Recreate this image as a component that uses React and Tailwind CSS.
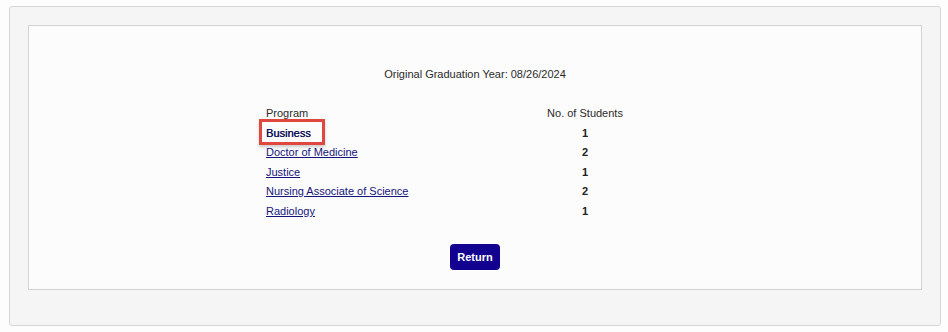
const programs = [
  { name: 'Business', count: 1, highlighted: true },
  { name: 'Doctor of Medicine', count: 2 },
  { name: 'Justice', count: 1 },
  { name: 'Nursing Associate of Science', count: 2 },
  { name: 'Radiology', count: 1 },
]

export default function App() {
  return (
    <div className="min-h-[332px] bg-[#fdfdfd] pl-[9px] pt-[6px] font-['Liberation_Sans',Arial,sans-serif] text-[11px] text-[#2a2a2a]">
      <div className="w-[932px] rounded-[3px] border border-[#d6d6d6] bg-[#f5f5f5] px-[18px] pt-[18px] pb-[35px]">
        <div className="border border-[#d2d2d2] bg-[#fcfcfc] pt-[42px] pb-[19px]">
          <p className="h-[13px] text-center leading-[13px]">
            Original Graduation Year: 08/26/2024
          </p>

          <div className="mx-auto mt-[23px] grid w-[418px] grid-cols-[220px_198px]">
            <div className="h-[19.5px] leading-[19.5px]">Program</div>
            <div className="h-[19.5px] text-center leading-[19.5px]">No. of Students</div>

            {programs.map((program) => (
              <div key={program.name} className="contents">
                <div className="relative h-[19.5px] leading-[19.5px]">
                  {program.highlighted ? (
                    <>
                      <span className="text-[#10105a] [text-shadow:0.3px_0_0_#10105a]">{program.name}</span>
                      <span className="absolute left-[-7px] top-[-4.5px] h-[26px] w-[66px] border-[3px] border-[#e0483f] shadow-[0_2px_3px_rgba(0,0,0,0.2)]" />
                    </>
                  ) : (
                    <a href="#" className="text-[#15157a] underline">
                      {program.name}
                    </a>
                  )}
                </div>
                <div className="h-[19.5px] text-center font-bold leading-[19.5px] text-[#222]">
                  {program.count}
                </div>
              </div>
            ))}
          </div>

          <div className="mt-[23px] flex justify-center">
            <button
              type="button"
              className="h-[26px] w-[50px] rounded-[4px] bg-[#12028f] text-[11px] font-bold text-white"
            >
              Return
            </button>
          </div>
        </div>
      </div>
    </div>
  )
}
